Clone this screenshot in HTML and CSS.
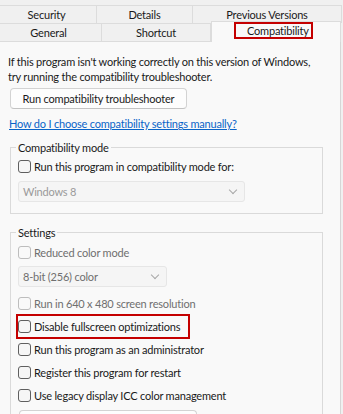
FILE: index.html
```html
<!DOCTYPE html>
<html lang="en">
<head>
<meta charset="utf-8">
<title>Properties - Compatibility</title>
<link rel="stylesheet" href="styles.css">
</head>
<body>
<div class="tabs">
  <div class="tabrow row1">
    <div class="tab t-sec">Security</div>
    <div class="tab t-det">Details</div>
    <div class="tab t-prev">Previous Versions</div>
  </div>
  <div class="tabrow row2">
    <div class="tab t-gen">General</div>
    <div class="tab t-short">Shortcut</div>
    <div class="tab t-compat"><span class="hl">Compatibility</span></div>
  </div>
</div>
<div class="panel">
  <p class="intro">If this program isn't working correctly on this version of Windows, try running the compatibility troubleshooter.</p>
  <div class="btn btn-run">Run compatibility troubleshooter</div>
  <a class="link" href="#">How do I choose compatibility settings manually?</a>

  <fieldset class="group g-compat">
    <legend>Compatibility mode</legend>
    <label class="cb"><span class="box"></span><span>Run this program in compatibility mode for:</span></label>
    <div class="select sel-win"><span>Windows 8</span><span class="chev"></span></div>
  </fieldset>

  <fieldset class="group g-settings">
    <legend>Settings</legend>
    <label class="cb disabled"><span class="box"></span><span>Reduced color mode</span></label>
    <div class="select sel-color"><span>8-bit (256) color</span><span class="chev"></span></div>
    <label class="cb disabled mt"><span class="box"></span><span>Run in 640 x 480 screen resolution</span></label>
    <div class="mark"><label class="cb"><span class="box"></span><span>Disable fullscreen optimizations</span></label></div>
    <label class="cb mt"><span class="box"></span><span>Run this program as an administrator</span></label>
    <label class="cb mt"><span class="box"></span><span>Register this program for restart</span></label>
    <label class="cb mt"><span class="box"></span><span>Use legacy display ICC color management</span></label>
    <div class="btn btn-dpi" role="button" aria-label="Change high DPI settings"></div>
  </fieldset>
</div>
</body>
</html>
```
FILE: styles.css
```css
* { box-sizing: border-box; }
html, body { margin: 0; padding: 0; }
body {
  background: #f0f0f0;
  font-family: Lato, "Liberation Sans", sans-serif;
  font-size: 11px;
  letter-spacing: -0.2px;
  color: #1a1a1a;
  width: 343px;
  height: 414px;
  overflow: hidden;
}

.tabs { padding-top: 5px; }
.tabrow { display: flex; }
.row1 { height: 18px; margin-left: -3px; }
.row2 { height: 19px; margin-left: -4px; }
.tab {
  display: flex;
  align-items: center;
  justify-content: center;
  background: #f0f0f0;
  border-top: 1px solid #dcdcdc;
  border-right: 1px solid #dcdcdc;
  line-height: 15px;
  white-space: nowrap;
  flex: none;
}
.row2 .tab { border-bottom: 1px solid #dcdcdc; }
.t-sec { width: 100px; }
.t-det { width: 96px; }
.t-prev { width: 149px; }
.t-gen { width: 106px; }
.t-short { width: 109px; }
.row2 .t-compat {
  width: 130px;
  margin-top: -2px;
  background: #f9f9f9;
  border: 1px solid #dcdcdc;
  border-bottom: none;
  justify-content: flex-start;
  align-items: flex-start;
  padding: 0 0 0 22px;
}
.hl {
  display: block;
  width: 79px;
  border: 2px solid #c40000;
  padding: 1px 0 0 11px;
  line-height: 12px;
  height: 17px;
}

.panel {
  width: 341px;
  min-height: 372px;
  background: #f9f9f9;
  border-right: 1px solid #d6d6d6;
  padding: 12px 8px 0 8px;
  display: flex;
  flex-direction: column;
  align-items: flex-start;
}
.panel > * { flex: none; }
.intro {
  margin: 0;
  line-height: 15px;
  width: 314px;
}
.btn {
  background: #fdfdfd;
  border: 1px solid #d3d3d3;
  border-bottom-color: #c3c3c3;
  border-radius: 4px;
  display: flex;
  align-items: center;
  justify-content: center;
  white-space: nowrap;
  flex: none;
}
.btn-run {
  margin: 4px 0 0 2px;
  width: 177px;
  height: 21px;
}
.link {
  margin-top: 7px;
  margin-left: 1px;
  color: #0a64c8;
  text-decoration: underline;
  line-height: 15px;
}

.group {
  margin: 9px 0 0 2px;
  width: 313px;
  border: 1px solid #dadada;
  padding: 5px 7px 11px 7px;
  display: flex;
  flex-direction: column;
  align-items: flex-start;
  min-inline-size: 0;
}
.group > * { flex: none; }
.group legend {
  padding: 0 2px;
  margin-left: -2px;
  line-height: 15px;
}
.g-settings { margin-top: 11px; padding-top: 6px; }

.cb {
  display: flex;
  align-items: center;
  height: 13px;
  line-height: 13px;
  white-space: nowrap;
}
.cb .box {
  width: 13px;
  height: 13px;
  border: 1px solid #5f5f5f;
  border-radius: 3px;
  background: #f6f6f6;
  margin-right: 3px;
  flex: none;
}
.cb.disabled { color: #6f6f6f; }
.cb.disabled .box { border-color: #bdbdbd; background: #f9f9f9; }
.mt { margin-top: 10px; }

.select {
  display: flex;
  align-items: center;
  justify-content: space-between;
  height: 21px;
  background: #f5f5f5;
  border: 1px solid #e6e6e6;
  border-radius: 3px;
  color: #9a9a9a;
  padding: 0 8px 0 4px;
  white-space: nowrap;
}
.sel-win { width: 227px; margin-top: 8px; }
.sel-color { width: 149px; margin-top: 7px; color: #6f6f6f; }
.chev {
  width: 6px;
  height: 6px;
  border-right: 1px solid #a8a8a8;
  border-bottom: 1px solid #a8a8a8;
  transform: rotate(45deg);
  margin-top: -3px;
}

.mark {
  margin: 4px 0 -6px -2px;
  border: 2px solid #c40000;
  padding: 4px 8px 4px 0;
}
.btn-dpi {
  margin: 8px 0 0 1px;
  width: 178px;
  height: 23px;
}
```
